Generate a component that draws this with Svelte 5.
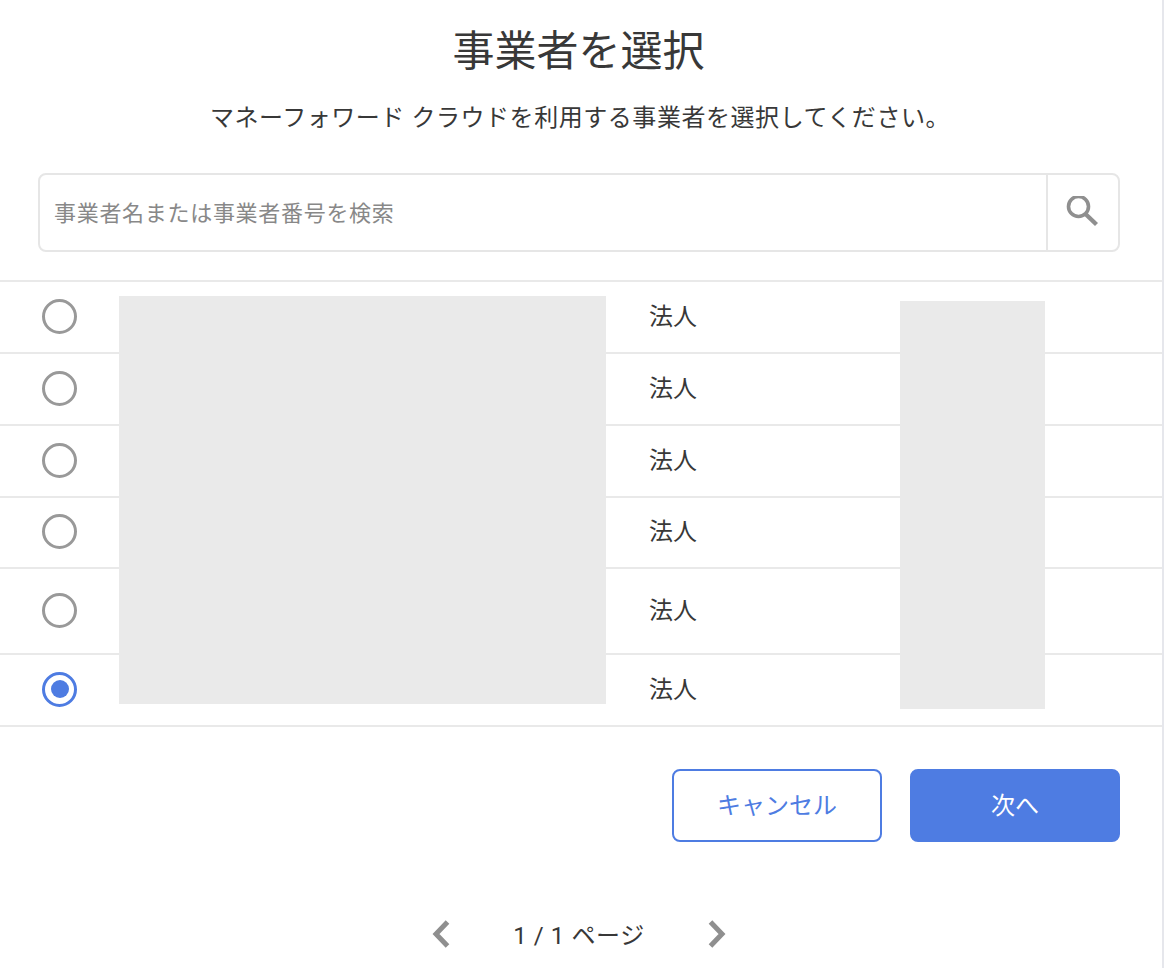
<script>
  const rows = [
    { type: "法人", height: 72, checked: false },
    { type: "法人", height: 72, checked: false },
    { type: "法人", height: 72, checked: false },
    { type: "法人", height: 71, checked: false },
    { type: "法人", height: 86, checked: false },
    { type: "法人", height: 72, checked: true }
  ];
</script>

<div class="page">
  <h1>事業者を選択</h1>
  <p class="lead">マネーフォワード クラウドを利用する事業者を選択してください。</p>

  <div class="search">
    <input type="text" placeholder="事業者名または事業者番号を検索" />
    <button class="search-btn" aria-label="検索">
      <svg width="34" height="34" viewBox="0 0 34 34" fill="none" stroke="#8f8f8f">
        <circle cx="12.5" cy="10.5" r="10" stroke-width="3.6" />
        <path d="M19.5 18 L30.5 28.5" stroke-width="4.4" />
      </svg>
    </button>
  </div>

  <div class="table">
    {#each rows as row}
      <div class="row" style="height: {row.height}px">
        <span class="radio" class:checked={row.checked}></span>
        <span class="type">{row.type}</span>
      </div>
    {/each}
    <div class="mask mask-name"></div>
    <div class="mask mask-number"></div>
  </div>

  <div class="actions">
    <button class="btn cancel">キャンセル</button>
    <button class="btn next">次へ</button>
  </div>

  <div class="pager">
    <svg width="20" height="28" viewBox="0 0 20 28" fill="none" stroke="#8f8f8f" stroke-width="5"><path d="M16.5 2 L5 14 L16.5 26" /></svg>
    <span class="count">1 / 1 ページ</span>
    <svg width="20" height="28" viewBox="0 0 20 28" fill="none" stroke="#8f8f8f" stroke-width="5"><path d="M3.5 2 L15 14 L3.5 26" /></svg>
  </div>
</div>

<style>
  :global(body) {
    margin: 0;
    background: #fff;
  }
  .page {
    width: 1164px;
    height: 968px;
    box-sizing: border-box;
    border-right: 2px solid #e6e7ec;
    overflow: hidden;
    font-family: Roboto, "Noto Sans CJK JP", sans-serif;
    color: #383838;
  }
  h1 {
    margin: 0;
    padding: 22px 5px 0 0;
    font-size: 42px;
    font-weight: 400;
    line-height: 60px;
    text-align: center;
  }
  .lead {
    margin: 16px 0 0;
    padding-right: 2px;
    font-size: 24px;
    line-height: 40px;
    letter-spacing: 0.55px;
    text-align: center;
  }
  .search {
    display: flex;
    margin: 35px 0 0 38px;
    width: 1082px;
    height: 79px;
    box-sizing: border-box;
    border: 2px solid #e6e6e6;
    border-radius: 8px;
  }
  .search input {
    flex: 1;
    min-width: 0;
    border: none;
    outline: none;
    padding: 2px 14px 0;
    background: none;
    font: inherit;
    font-size: 22px;
    letter-spacing: 0.7px;
    color: #383838;
  }
  .search input::placeholder {
    color: #888;
    opacity: 1;
  }
  .search-btn {
    width: 72px;
    padding: 0;
    border: none;
    border-left: 2px solid #e6e6e6;
    background: none;
    display: flex;
    align-items: center;
    justify-content: center;
  }
  .table {
    position: relative;
    margin-top: 28px;
    border-top: 2px solid #e9e9e9;
  }
  .row {
    display: flex;
    align-items: center;
    box-sizing: border-box;
    border-bottom: 2px solid #e9e9e9;
    padding: 0 0 2px 42px;
    font-size: 24px;
  }
  .radio {
    width: 35px;
    height: 35px;
    box-sizing: border-box;
    border: 3.5px solid #999;
    border-radius: 50%;
    display: flex;
    align-items: center;
    justify-content: center;
  }
  .radio.checked {
    border-color: #4e7ce2;
  }
  .radio.checked::after {
    content: "";
    width: 18px;
    height: 18px;
    border-radius: 50%;
    background: #4e7ce2;
  }
  .type {
    margin-left: 572px;
    padding-bottom: 4px;
  }
  .mask {
    position: absolute;
    background: #eaeaea;
  }
  .mask-name {
    left: 119px;
    top: 14px;
    width: 487px;
    height: 408px;
  }
  .mask-number {
    left: 900px;
    top: 19px;
    width: 145px;
    height: 408px;
  }
  .actions {
    display: flex;
    justify-content: flex-end;
    gap: 28px;
    margin: 42px 0 0;
    padding-right: 42px;
  }
  .btn {
    width: 210px;
    height: 73px;
    box-sizing: border-box;
    border-radius: 8px;
    padding-bottom: 6px;
    font: inherit;
    font-size: 24px;
    border: 2px solid #4e7ce2;
  }
  .cancel {
    background: #fff;
    color: #4e7ce2;
  }
  .next {
    background: #4e7ce2;
    color: #fff;
  }
  .pager {
    display: flex;
    align-items: center;
    justify-content: center;
    gap: 58px;
    margin-top: 74px;
    padding-right: 4px;
  }
  .count {
    margin-top: 4px;
    font-size: 24px;
    line-height: 32px;
    letter-spacing: 0.6px;
    width: 140px;
    text-align: center;
  }
</style>
